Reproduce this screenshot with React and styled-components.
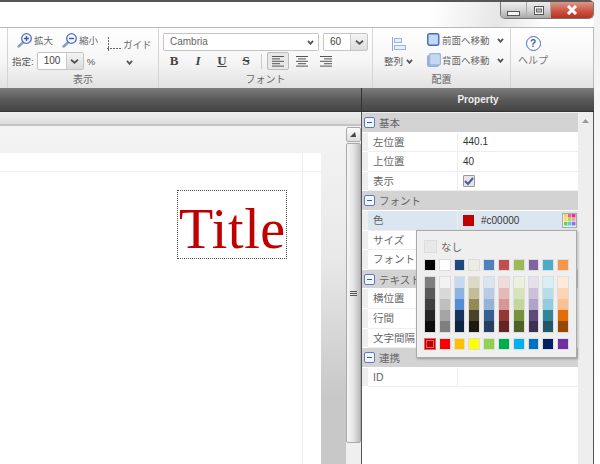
import React from 'react'
import styled, { createGlobalStyle } from 'styled-components'

const SANS = `"Liberation Sans", "Noto Sans CJK JP", sans-serif`

const paletteTop = ['#000000', '#ffffff', '#1f497d', '#eeece1', '#4f81bd', '#c0504d', '#9bbb59', '#8064a2', '#4bacc6', '#f79646']
const paletteColumns = [
  ['#7f7f7f', '#595959', '#3f3f3f', '#262626', '#0c0c0c'],
  ['#f2f2f2', '#d8d8d8', '#bfbfbf', '#a5a5a5', '#7f7f7f'],
  ['#c6d9f0', '#8db3e2', '#548dd4', '#17365d', '#0f243e'],
  ['#ddd9c3', '#c4bd97', '#938953', '#494429', '#1d1b10'],
  ['#dbe5f1', '#b8cce4', '#95b3d7', '#366092', '#244061'],
  ['#f2dcdb', '#e5b9b7', '#d99694', '#953734', '#632423'],
  ['#ebf1dd', '#d7e3bc', '#c3d69b', '#76923c', '#4f6128'],
  ['#e5e0ec', '#ccc1d9', '#b2a2c7', '#5f497a', '#3f3151'],
  ['#dbeef3', '#b7dde8', '#92cddc', '#31859b', '#205867'],
  ['#fdeada', '#fbd5b5', '#fac08f', '#e36c09', '#974806'],
]
const paletteStandard = ['#c00000', '#ff0000', '#ffc000', '#ffff00', '#92d050', '#00b050', '#00b0f0', '#0070c0', '#002060', '#7030a0']

const sections = [
  {
    title: '基本',
    rows: [
      { label: '左位置', value: '440.1' },
      { label: '上位置', value: '40' },
      { label: '表示', check: true },
    ],
  },
  {
    title: 'フォント',
    rows: [
      { label: '色', color: '#c00000', selected: true },
      { label: 'サイズ' },
      { label: 'フォント' },
    ],
  },
  {
    title: 'テキスト',
    rows: [{ label: '横位置' }, { label: '行間' }, { label: '文字間隔' }],
  },
  {
    title: '連携',
    rows: [{ label: 'ID' }],
  },
]

export default function App() {
  return (
    <>
      <GlobalStyle />
      <Screen>
        <Window>
          <TitleBar>
            <WindowButtons>
              <WindowButton $width={26}>
                <MinimizeGlyph width="13" height="5"><rect x="0.5" y="0.5" width="12" height="4" fill="#f4f4f4" stroke="#555" /></MinimizeGlyph>
              </WindowButton>
              <WindowButton $width={24}>
                <svg width="10" height="9"><rect x="0.5" y="0.5" width="9" height="8" fill="#f0f0f0" stroke="#555" /><rect x="2.5" y="3" width="5" height="3" fill="#bbb" stroke="#666" /></svg>
              </WindowButton>
              <CloseButton>
                <svg width="14" height="10" viewBox="0 0 14 10"><path d="M3 1l8 8M11 1l-8 8" stroke="#fff" strokeWidth="3" /></svg>
              </CloseButton>
            </WindowButtons>
          </TitleBar>

          <Ribbon>
            <RibbonEdge />
            <RibbonGroup $width={151}>
              <GroupBody $padding="4px 0 0 4px">
                <ZoomRow>
                  <ZoomColumn>
                    <ZoomTools>
                      <ToolButton><ZoomIcon sign="plus" />拡大</ToolButton>
                      <ToolButton><ZoomIcon sign="minus" />縮小</ToolButton>
                    </ZoomTools>
                    <Line $gap={3}>
                      <RibbonText>指定:</RibbonText>
                      <Combo $width={47}>
                        <ComboValue>100</ComboValue>
                        <ComboArrow $width={17}><Chevron /></ComboArrow>
                      </Combo>
                      <RibbonText>%</RibbonText>
                    </Line>
                  </ZoomColumn>
                  <GuideColumn>
                    <ToolButton><GuideIcon />ガイド</ToolButton>
                    <Chevron small />
                  </GuideColumn>
                </ZoomRow>
              </GroupBody>
              <GroupLabel>表示</GroupLabel>
            </RibbonGroup>

            <RibbonGroup $width={214}>
              <GroupBody $padding="5px 0 0 4px">
                <FontColumn>
                  <Line $gap={4}>
                    <Combo $width={156}>
                      <ComboValue $color="#666">Cambria</ComboValue>
                      <ComboArrow $width={16} $flat><Chevron small /></ComboArrow>
                    </Combo>
                    <Combo $width={45}>
                      <ComboValue>60</ComboValue>
                      <ComboArrow $width={17}><Chevron /></ComboArrow>
                    </Combo>
                  </Line>
                  <FormatRow>
                    <FormatButton>B</FormatButton>
                    <FormatButton $italic>I</FormatButton>
                    <FormatButton $underline>U</FormatButton>
                    <FormatButton $strike>S</FormatButton>
                    <FormatSeparator />
                    <AlignButton $active><AlignIcon kind="left" /></AlignButton>
                    <AlignButton><AlignIcon kind="center" /></AlignButton>
                    <AlignButton><AlignIcon kind="right" /></AlignButton>
                  </FormatRow>
                </FontColumn>
              </GroupBody>
              <GroupLabel>フォント</GroupLabel>
            </RibbonGroup>

            <RibbonGroup $width={138}>
              <GroupBody $padding="4px 0 0 11px">
                <ArrangeRow>
                  <ArrangeColumn>
                    <ArrangeIcon />
                    <Line $gap={3}>
                      <RibbonText>整列</RibbonText>
                      <Chevron small />
                    </Line>
                  </ArrangeColumn>
                  <OrderColumn>
                    <Line $gap={7}>
                      <ToolButton><LayerIcon />前面へ移動</ToolButton>
                      <Chevron small />
                    </Line>
                    <Line $gap={7}>
                      <ToolButton><LayerIcon back />背面へ移動</ToolButton>
                      <Chevron small />
                    </Line>
                  </OrderColumn>
                </ArrangeRow>
              </GroupBody>
              <GroupLabel>配置</GroupLabel>
            </RibbonGroup>

            <HelpGroup>
              <HelpIcon>?</HelpIcon>
              <HelpText>ヘルプ</HelpText>
            </HelpGroup>
          </Ribbon>

          <HeaderBar>
            <HeaderSpacer />
            <HeaderTitle>Property</HeaderTitle>
          </HeaderBar>

          <Main>
            <EditorColumn>
              <EditorStrip />
              <EditorBody>
                <Canvas>
                  <Page>
                    <GuideH />
                    <GuideV />
                    <TitleBox>Title</TitleBox>
                  </Page>
                </Canvas>
                <ScrollBar>
                  <ScrollUp>
                    <svg width="7" height="5"><path d="M0 5L5 0L6 5Z" fill="#444" /></svg>
                  </ScrollUp>
                  <ScrollThumb>
                    <Grip>
                      <GripLine />
                      <GripLine />
                      <GripLine />
                    </Grip>
                  </ScrollThumb>
                </ScrollBar>
              </EditorBody>
            </EditorColumn>

            <PropertyPanel>
              <PropertyTable>
                {sections.map((section) => (
                  <div key={section.title}>
                    <SectionRow>
                      <Collapse />
                      {section.title}
                    </SectionRow>
                    {section.rows.map((row) => (
                      <PropRow key={row.label} $selected={row.selected}>
                        <PropLabel>{row.label}</PropLabel>
                        <PropValue>
                          {row.value}
                          {row.check && <CheckBox><svg width="10" height="9"><path d="M1 4l3 3 5-6" fill="none" stroke="#46609a" strokeWidth="2" /></svg></CheckBox>}
                          {row.color && (
                            <>
                              <ColorChip $color={row.color} />
                              <ColorCode>{row.color}</ColorCode>
                              <PaletteButton>
                                <svg width="12" height="12">
                                  {['#f7d25c', '#f25ca2', '#e23c6a', '#f5e050', '#a5e05a', '#f59ad0', '#63d063', '#5bc8e8', '#7c7ce8'].map((c, i) => (
                                    <rect key={c} x={(i % 3) * 4} y={Math.floor(i / 3) * 4} width="3.5" height="3.5" fill={c} />
                                  ))}
                                </svg>
                              </PaletteButton>
                            </>
                          )}
                        </PropValue>
                      </PropRow>
                    ))}
                  </div>
                ))}
              </PropertyTable>
              <PanelScroll>
                <svg width="7" height="4"><path d="M0 4L3.5 0L7 4Z" fill="#999" /></svg>
              </PanelScroll>

              <ColorPopup>
                <NoneRow>
                  <NoneBox />
                  なし
                </NoneRow>
                <SwatchRow>
                  {paletteTop.map((c) => <Swatch key={c} $color={c} />)}
                </SwatchRow>
                <SwatchRow>
                  {paletteColumns.map((column) => (
                    <ShadeColumn key={column[0]}>
                      {column.map((c) => <Shade key={c} $color={c} />)}
                    </ShadeColumn>
                  ))}
                </SwatchRow>
                <SwatchRow>
                  {paletteStandard.map((c, i) => <Swatch key={c} $color={c} $current={i === 0} />)}
                </SwatchRow>
              </ColorPopup>
            </PropertyPanel>
          </Main>
        </Window>
      </Screen>
    </>
  )
}

function Chevron({ small }) {
  const width = small ? 7 : 9
  return (
    <ChevronSvg width={width} height="5" viewBox={`0 0 ${width} 5`}>
      <path d={`M1 0.8L${width / 2} 3.8L${width - 1} 0.8`} fill="none" stroke="#555" strokeWidth="1.8" />
    </ChevronSvg>
  )
}

function ZoomIcon({ sign }) {
  return (
    <svg width="16" height="15" viewBox="0 0 16 15">
      <path d="M6 9.5L1.5 13.5" stroke="#8a9cc0" strokeWidth="2.4" strokeLinecap="round" />
      <circle cx="9.5" cy="5.5" r="4.8" fill="#f4f8ff" stroke="#4a6fc0" strokeWidth="1.3" />
      <path d="M7 5.5h5" stroke="#3a55b0" strokeWidth="1.4" />
      {sign === 'plus' && <path d="M9.5 3v5" stroke="#3a55b0" strokeWidth="1.4" />}
    </svg>
  )
}

function GuideIcon() {
  return (
    <svg width="15" height="15" viewBox="0 0 15 15">
      <path d="M1.5 0v14" stroke="#666" strokeDasharray="2 1" />
      <path d="M0 11.5h15" stroke="#666" strokeDasharray="2 1" />
    </svg>
  )
}

function AlignIcon({ kind }) {
  const x = (w) => (kind === 'left' ? 0 : kind === 'right' ? 12 - w : (12 - w) / 2)
  const widths = [12, 8, 12, 8, 12]
  return (
    <svg width="12" height="11">
      {widths.map((w, i) => (
        <rect key={i} x={x(w)} y={i * 2.4} width={w} height="1" fill="#555" />
      ))}
    </svg>
  )
}

function ArrangeIcon() {
  return (
    <svg width="14" height="14" viewBox="0 0 14 14">
      <path d="M0.5 0v14" stroke="#8aa8d4" />
      <rect x="2.5" y="1.5" width="7" height="4" fill="#e4eefa" stroke="#9ab4dc" />
      <rect x="2.5" y="8.5" width="11" height="4" fill="#e4eefa" stroke="#9ab4dc" />
    </svg>
  )
}

function LayerIcon({ back }) {
  return (
    <svg width="14" height="14" viewBox="0 0 14 14">
      {back && <rect x="0" y="2" width="12" height="12" rx="2" fill="#8fb0e0" />}
      <rect x={back ? 2.5 : 0.75} y={back ? 0.5 : 0.75} width="11" height="11.5" rx="2" fill="#c4d8f2" stroke={back ? '#9cb8e0' : '#3f6cc0'} strokeWidth="1.4" />
    </svg>
  )
}

const GlobalStyle = createGlobalStyle`
  html, body {
    margin: 0;
    padding: 0;
    background: #fff;
    overflow: hidden;
  }
`

const Screen = styled.div`
  width: 600px;
  height: 464px;
  overflow: hidden;
  padding-right: 6px;
  box-sizing: border-box;
  font-family: ${SANS};
  background: linear-gradient(100deg, #fff 70%, #f0f0f0 85%, #fff 100%);
`

const Window = styled.div`
  display: flex;
  flex-direction: column;
  height: 100%;
  border-top: 2px solid #555;
  border-top-right-radius: 5px;
  box-sizing: border-box;
`

const TitleBar = styled.div`
  display: flex;
  justify-content: flex-end;
  height: 25px;
  flex: none;
  background: linear-gradient(100deg, #fff 72%, #e6e6e6 84%, #fff 92%);
`

const WindowButtons = styled.div`
  display: flex;
  height: 16px;
  border: 1px solid #777;
  border-top: none;
  border-radius: 0 0 5px 5px;
  overflow: hidden;
`

const WindowButton = styled.div`
  display: flex;
  align-items: center;
  justify-content: center;
  width: ${(p) => p.$width}px;
  box-sizing: border-box;
  background: linear-gradient(#ececec, #d4d4d4 50%, #a8a8a8);
  border-right: 1px solid #aaa;
`

const MinimizeGlyph = styled.svg`
  margin-top: 6px;
`

const CloseButton = styled.div`
  display: flex;
  align-items: center;
  justify-content: center;
  width: 42px;
  background: linear-gradient(#d9988a, #cf5a48 50%, #b8301e);
`

const Ribbon = styled.div`
  display: flex;
  height: 61px;
  flex: none;
  box-sizing: border-box;
  border-top: 1px solid #b8b8b8;
  border-right: 1px solid #bbb;
  background: linear-gradient(#ffffff, #f6f6f6 55%, #e2e2e2);
`

const RibbonEdge = styled.div`
  width: 8px;
  flex: none;
  box-sizing: border-box;
  border-right: 1px solid #d4d4d4;
`

const RibbonGroup = styled.div`
  display: flex;
  flex-direction: column;
  width: ${(p) => p.$width}px;
  flex: none;
  box-sizing: border-box;
  border-right: 1px solid #d4d4d4;
`

const GroupBody = styled.div`
  flex: 1;
  padding: ${(p) => p.$padding};
`

const GroupLabel = styled.div`
  height: 14px;
  line-height: 12px;
  font-size: 10px;
  color: #666;
  text-align: center;
`

const ZoomRow = styled.div`
  display: flex;
  gap: 9px;
`

const ZoomColumn = styled.div`
  display: flex;
  flex-direction: column;
  gap: 4px;
`

const ZoomTools = styled.div`
  display: flex;
  gap: 9px;
  padding-left: 5px;
`

const GuideColumn = styled.div`
  display: flex;
  flex-direction: column;
  align-items: center;
  gap: 8px;
  padding-top: 4px;
`

const Line = styled.div`
  display: flex;
  align-items: center;
  gap: ${(p) => p.$gap}px;
`

const ToolButton = styled.div`
  display: flex;
  align-items: center;
  gap: 1px;
  height: 16px;
  font-size: 9.5px;
  color: #666;
  white-space: nowrap;
`

const RibbonText = styled.span`
  font-size: 9.5px;
  color: #555;
  white-space: nowrap;
`

const ChevronSvg = styled.svg`
  flex: none;
`

const Combo = styled.div`
  display: flex;
  width: ${(p) => p.$width}px;
  height: 18px;
  box-sizing: border-box;
  border: 1px solid #c4c4c4;
  border-radius: 2px;
  background: #fff;
`

const ComboValue = styled.div`
  flex: 1;
  padding-left: 6px;
  font-size: 10px;
  line-height: 16px;
  color: ${(p) => p.$color || '#444'};
`

const ComboArrow = styled.div`
  display: flex;
  align-items: center;
  justify-content: center;
  width: ${(p) => p.$width}px;
  box-sizing: border-box;
  border-left: ${(p) => (p.$flat ? 'none' : '1px solid #ccc')};
  background: ${(p) => (p.$flat ? '#fff' : 'linear-gradient(#f4f4f4, #dcdcdc)')};
`

const FontColumn = styled.div`
  display: flex;
  flex-direction: column;
  gap: 1px;
`

const FormatRow = styled.div`
  display: flex;
  align-items: center;
  height: 18px;
  margin-left: -1px;
`

const FormatButton = styled.div`
  width: 24px;
  text-align: center;
  font-family: "Liberation Serif", serif;
  font-size: 13px;
  font-weight: bold;
  color: #444;
  font-style: ${(p) => (p.$italic ? 'italic' : 'normal')};
  text-decoration: ${(p) => (p.$underline ? 'underline' : p.$strike ? 'line-through' : 'none')};
`

const FormatSeparator = styled.div`
  width: 1px;
  height: 15px;
  margin: 0 5px 0 3px;
  background: #ccc;
`

const AlignButton = styled.div`
  display: flex;
  align-items: center;
  justify-content: center;
  width: 22px;
  height: 18px;
  margin-right: 2px;
  box-sizing: border-box;
  border: 1px solid ${(p) => (p.$active ? '#bbb' : 'transparent')};
  border-radius: 2px;
  background: ${(p) => (p.$active ? '#e8e8e8' : 'none')};
`

const ArrangeRow = styled.div`
  display: flex;
  gap: 14px;
`

const ArrangeColumn = styled.div`
  display: flex;
  flex-direction: column;
  align-items: center;
  gap: 3px;
  padding-top: 5px;
`

const OrderColumn = styled.div`
  display: flex;
  flex-direction: column;
  gap: 4px;
`

const HelpGroup = styled.div`
  flex: 1;
  display: flex;
  flex-direction: column;
  align-items: center;
  padding: 8px 38px 0 0;
  gap: 1px;
`

const HelpIcon = styled.div`
  width: 13px;
  height: 13px;
  border: 1.5px solid #4a68c8;
  border-radius: 50%;
  background: #fff;
  color: #3a55b8;
  font-size: 10px;
  font-weight: bold;
  line-height: 13px;
  text-align: center;
`

const HelpText = styled.div`
  font-size: 10px;
  color: #777;
  white-space: nowrap;
`

const HeaderBar = styled.div`
  display: flex;
  height: 24px;
  flex: none;
  background: linear-gradient(#7c7c7c, #5a5a5a 50%, #444);
  border-bottom: 1px solid #333;
  box-sizing: border-box;
`

const HeaderSpacer = styled.div`
  width: 362px;
  flex: none;
  box-sizing: border-box;
  border-right: 1px solid #333;
`

const HeaderTitle = styled.div`
  flex: 1;
  font-size: 10px;
  font-weight: bold;
  line-height: 23px;
  text-align: center;
  color: #eee;
`

const Main = styled.div`
  flex: 1;
  display: flex;
  min-height: 0;
`

const EditorColumn = styled.div`
  display: flex;
  flex-direction: column;
  width: 361px;
  flex: none;
  border-right: 1px solid #555;
`

const EditorStrip = styled.div`
  height: 14px;
  flex: none;
  box-sizing: border-box;
  background: linear-gradient(#eeeeee, #dddddd);
  border-bottom: 2px solid #c4c4c4;
`

const EditorBody = styled.div`
  flex: 1;
  display: flex;
  min-height: 0;
`

const Canvas = styled.div`
  flex: 1;
  padding: 27px 25px 0 0;
  background: linear-gradient(#f4f4f4, #e8e8e8 40%, #c8c8c8 80%);
  overflow: hidden;
`

const Page = styled.div`
  position: relative;
  height: 100%;
  background: #fff;
`

const GuideH = styled.div`
  position: absolute;
  left: 0;
  right: 0;
  top: 18px;
  height: 1px;
  background: #eee;
`

const GuideV = styled.div`
  position: absolute;
  top: 0;
  bottom: 0;
  left: 302px;
  width: 1px;
  background: #eee;
`

const TitleBox = styled.div`
  position: absolute;
  left: 177px;
  top: 37px;
  width: 110px;
  height: 69px;
  box-sizing: border-box;
  border: 1px dotted #555;
  padding-left: 1px;
  font-family: "Liberation Serif", serif;
  font-size: 56px;
  letter-spacing: 0.6px;
  line-height: 77px;
  color: #c00000;
  white-space: nowrap;
`

const ScrollBar = styled.div`
  display: flex;
  flex-direction: column;
  width: 15px;
  flex: none;
  padding-top: 1px;
  background: #efefef;
  box-sizing: border-box;
`

const ScrollUp = styled.div`
  display: flex;
  align-items: center;
  justify-content: center;
  height: 15px;
  box-sizing: border-box;
  border: 1px solid #aaa;
  border-radius: 2px;
  background: linear-gradient(#fbfbfb, #dedede);
`

const ScrollThumb = styled.div`
  display: flex;
  align-items: center;
  justify-content: center;
  height: 300px;
  margin-top: 1px;
  box-sizing: border-box;
  border: 1px solid #aaa;
  border-radius: 2px;
  background: linear-gradient(90deg, #f6f6f6, #e4e4e4 50%, #bcbcbc);
`

const Grip = styled.div`
  display: flex;
  flex-direction: column;
  gap: 1px;
`

const GripLine = styled.div`
  width: 7px;
  height: 1px;
  background: #555;
`

const PropertyPanel = styled.div`
  position: relative;
  flex: 1;
  display: flex;
  background: #fff;
  border-right: 1px solid #555;
`

const PropertyTable = styled.div`
  width: 216px;
  flex: none;
  padding-top: 1px;
  background: linear-gradient(#eeeeee 1px, #fff 1px);
`

const SectionRow = styled.div`
  display: flex;
  align-items: center;
  gap: 4px;
  height: 18.6px;
  margin-bottom: 1px;
  padding-left: 2px;
  background: #d3d3d3;
  font-size: 10.5px;
  color: #666;
`

const Collapse = styled.span`
  position: relative;
  width: 9px;
  height: 9px;
  flex: none;
  border: 1px solid #5a78d0;
  border-radius: 2px;
  background: #f4f6ff;

  &::after {
    content: '';
    position: absolute;
    left: 2px;
    right: 2px;
    top: 4px;
    height: 1px;
    background: #3a55b0;
  }
`

const PropRow = styled.div`
  display: flex;
  height: 18.6px;
  margin-left: 6px;
  margin-bottom: 1px;
  background: ${(p) => (p.$selected ? '#dce6f1' : '#fff')};
  box-shadow: 0 1px 0 #eeeeee, -6px 0 0 #eeeeee;
  font-size: 10.5px;
  line-height: 19px;
  color: #666;
`

const PropLabel = styled.div`
  width: 90px;
  flex: none;
  padding-left: 5px;
  box-sizing: border-box;
  border-right: 1px solid #eeeeee;
`

const PropValue = styled.div`
  flex: 1;
  display: flex;
  align-items: center;
  padding-left: 5px;
  font-size: 10px;
  color: #333;
`

const CheckBox = styled.span`
  display: flex;
  align-items: center;
  justify-content: center;
  width: 10px;
  height: 10px;
  border: 1px solid #999;
  border-radius: 1px;
  background: #e6e6ea;
`

const ColorChip = styled.span`
  width: 11px;
  height: 11px;
  background: ${(p) => p.$color};
`

const ColorCode = styled.span`
  margin-left: 7px;
  flex: 1;
  font-size: 10px;
  color: #333;
`

const PaletteButton = styled.span`
  display: flex;
  align-items: center;
  justify-content: center;
  width: 13px;
  height: 13px;
  margin-right: 1px;
  border: 1px solid #aaa;
  background: #eee;
`

const PanelScroll = styled.div`
  flex: 1;
  display: flex;
  justify-content: center;
  padding-top: 7px;
  align-items: flex-start;
  background: #eeeeee;
`

const ColorPopup = styled.div`
  position: absolute;
  left: 54px;
  top: 118px;
  width: 161px;
  height: 128px;
  box-sizing: border-box;
  padding: 9px 7px;
  display: flex;
  flex-direction: column;
  gap: 5px;
  background: #efefef;
  border: 1px solid #aaa;
  box-shadow: 1px 1px 2px rgba(0, 0, 0, 0.3);
`

const NoneRow = styled.div`
  display: flex;
  align-items: center;
  gap: 4px;
  height: 13px;
  margin-bottom: 1px;
  font-size: 10.5px;
  color: #666;
`

const NoneBox = styled.span`
  width: 13px;
  height: 13px;
  box-sizing: border-box;
  border: 1px solid #ddd;
  background: #e8e8e8;
`

const SwatchRow = styled.div`
  display: flex;
  gap: 3px;
`

const Swatch = styled.span`
  width: 12px;
  height: 12px;
  box-sizing: border-box;
  background: ${(p) => p.$color};
  border: 1px solid ${(p) => (p.$current ? '#f06060' : '#dddddd')};
  outline: ${(p) => (p.$current ? '1px solid #f06060' : 'none')};
  outline-offset: ${(p) => (p.$current ? '-3px' : '0')};
`

const ShadeColumn = styled.div`
  display: flex;
  flex-direction: column;
  width: 12px;
  box-sizing: border-box;
  border: 1px solid #dddddd;
`

const Shade = styled.span`
  height: 11px;
  background: ${(p) => p.$color};
`
